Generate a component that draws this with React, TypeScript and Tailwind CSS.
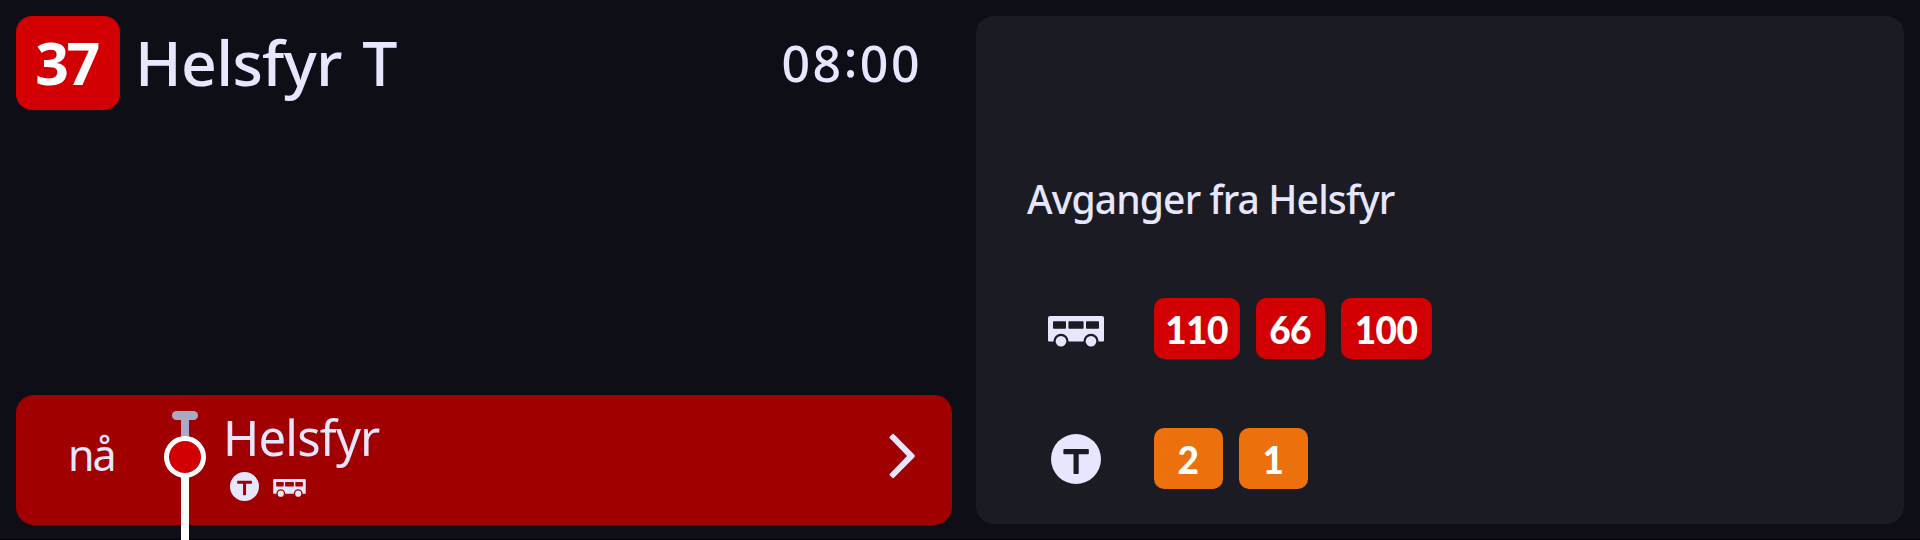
import React from "react";

function Bus({ className, hole }: { className: string; hole: string }) {
  return (
    <svg viewBox="0 0 56 31" className={className} fill="#e6e6ff">
      <path d="M2 0H54Q56 0 56 2V24.6Q56 25.6 55 25.6H1Q0 25.6 0 24.6V2Q0 0 2 0Z" />
      <g fill={hole}>
        <rect x="5" y="5.2" width="13" height="7.6" rx="0.8" />
        <rect x="20.4" y="5.2" width="15.2" height="7.6" rx="0.8" />
        <rect x="38" y="5.2" width="13" height="7.6" rx="0.8" />
        <path d="M5.4 27V25.3A7.6 7.6 0 0 1 20.6 25.3V27ZM35.4 27V25.3A7.6 7.6 0 0 1 50.6 25.3V27Z" />
      </g>
      <circle cx="13" cy="25.3" r="5.3" />
      <circle cx="43" cy="25.3" r="5.3" />
    </svg>
  );
}

function Metro({ className, hole }: { className: string; hole: string }) {
  return (
    <svg viewBox="0 0 50 50" className={className}>
      <circle cx="25" cy="25" r="25" fill="#e6e6ff" />
      <path
        fill={hole}
        d="M13.2 15H37Q37.8 15 37.8 15.8V19.4Q37.8 20.2 37 20.2H27.7V39.2Q27.7 40 26.9 40H23.3Q22.5 40 22.5 39.2V20.2H13.2Q12.4 20.2 12.4 19.4V15.8Q12.4 15 13.2 15Z"
      />
    </svg>
  );
}

function Line({ children, className }: { children: React.ReactNode; className: string }) {
  return (
    <span
      className={`flex h-[61px] items-center justify-center rounded-[10px] pr-px pt-px font-['Lato',sans-serif] text-[37px] font-black leading-none tracking-[-0.6px] text-white ${className}`}
    >
      {children}
    </span>
  );
}

export default function App() {
  return (
    <div className="flex h-[540px] w-[1920px] gap-6 overflow-hidden bg-[#0e0e17] p-4 font-['Noto_Sans','Open_Sans',sans-serif] text-[#e6e6ff] shadow-[inset_0_-1px_0_#020005]">
      <main className="flex h-[509px] w-[936px] shrink-0 flex-col">
        <header className="flex h-[94px] items-center">
          <span className="flex h-[94px] w-[104px] items-center justify-center rounded-2xl bg-[#d30003] pb-[2px] pr-[3px] text-[59px] font-bold leading-none tracking-[-2.5px] text-white">
            37
          </span>
          <h1 className="ml-[15px] whitespace-nowrap pb-[2px] text-[62.5px] font-medium leading-none tracking-[-0.7px] [word-spacing:5px]">
            Helsfyr T
          </h1>
          <time className="ml-auto mr-[30px] flex text-[50px] font-medium leading-none tracking-[2.5px]">
            08<span className="pb-[5px] leading-[40px]">:</span>00
          </time>
        </header>
        <section className="mt-auto flex h-[130px] shrink-0 rounded-[18px] bg-[#a10000]">
          <span className="w-[113px] pl-[52px] pt-[38px] text-[43px] leading-none tracking-[-2px]">nå</span>
          <div className="relative ml-[35px] h-[130px] w-[42px]">
            <svg viewBox="0 0 42 145" className="absolute left-0 top-0 h-[145px] w-[42px]">
              <path d="M17 20h8v30h-8z" fill="#aaaac4" />
              <rect x="8" y="16" width="26" height="9" rx="4.5" fill="#aaaac4" />
              <path d="M17 70h8v75h-8z" fill="#fff" />
              <circle cx="21" cy="62" r="18.5" fill="#d30003" stroke="#fff" strokeWidth="5" />
            </svg>
          </div>
          <div className="ml-[17px] flex flex-col">
            <h2 className="pt-[18px] text-[49px] leading-none tracking-[-0.8px]">Helsfyr</h2>
            <div className="ml-[7px] mt-[10px] flex">
              <Metro className="h-[29px] w-[29px]" hole="#a10000" />
              <Bus className="ml-[14px] mt-[7px] h-[18px] w-[33px]" hole="#a10000" />
            </div>
          </div>
          <svg viewBox="0 0 26 46" className="ml-auto mr-[37px] mt-[38px] h-[46px] w-[26px]">
            <path
              d="M0.9 5.3Q0 4.4 0.9 3.5L3.2 1.3Q4.1 0.4 5 1.3L25.1 21.4Q26.5 23 25.1 24.6L5 44.7Q4.1 45.6 3.2 44.7L0.9 42.5Q0 41.6 0.9 40.7L18 23Z"
              fill="#e6e6ff"
            />
          </svg>
        </section>
      </main>
      <aside className="flex h-[508px] w-[928px] flex-col rounded-[18px] bg-[#1b1b24] pl-[51px]">
        <h2 className="mt-[163px] whitespace-nowrap text-[39px] font-medium leading-none tracking-[-0.85px]">
          Avganger fra Helsfyr
        </h2>
        <div className="mt-[80px] flex h-[61px] items-center">
          <Bus className="ml-[21px] mt-[5px] h-[31px] w-[56px]" hole="#1b1b24" />
          <div className="ml-[50px] flex gap-4">
            <Line className="w-[86px] bg-[#d30003]">110</Line>
            <Line className="w-[69px] bg-[#d30003]">66</Line>
            <Line className="w-[91px] bg-[#d30003]">100</Line>
          </div>
        </div>
        <div className="mt-[69px] flex h-[61px] items-center">
          <Metro className="ml-[24px] h-[50px] w-[50px]" hole="#1b1b24" />
          <div className="ml-[53px] flex gap-4">
            <Line className="w-[69px] bg-[#ec700c]">2</Line>
            <Line className="w-[69px] bg-[#ec700c]">1</Line>
          </div>
        </div>
      </aside>
    </div>
  );
}
